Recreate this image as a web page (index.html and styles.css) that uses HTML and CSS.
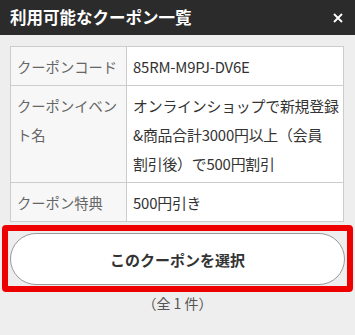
FILE: index.html
```html
<!DOCTYPE html>
<html lang="ja">
<head>
  <meta charset="UTF-8" />
  <meta name="viewport" content="width=device-width, initial-scale=1.0"/>
  <title>利用可能なクーポン一覧</title>
  <link rel="stylesheet" href="styles.css">
</head>
<body>

<div class="modal-header">
  <h1>利用可能なクーポン一覧</h1>
  <button class="close-btn" aria-label="閉じる">
    <svg width="10" height="10" viewBox="0 0 10 10">
      <path d="M1 1L9 9M9 1L1 9" stroke="#fff" stroke-width="1.8" />
    </svg>
  </button>
</div>

<div class="modal-body">
  <table class="coupon-table">
    <tr>
      <th>クーポンコード</th>
      <td>85RM-M9PJ-DV6E</td>
    </tr>
    <tr>
      <th>クーポンイベント名</th>
      <td>オンラインショップで新規登録&amp;商品合計3000円以上（会員<br>割引後）で500円割引</td>
    </tr>
    <tr>
      <th>クーポン特典</th>
      <td>500円引き</td>
    </tr>
  </table>

  <div class="select-wrap">
    <button class="select-btn">このクーポンを選択</button>
  </div>

  <p class="count">（全 1 件）</p>
</div>

</body>
</html>
```

FILE: styles.css
```css
:root {
  --bg: #eeeeee;
  --border: #cccccc;
  --text: #333333;
}

* { box-sizing: border-box; }

body {
  margin: 0;
  background: var(--bg);
  color: var(--text);
  font-family: "Noto Sans CJK JP", "Noto Sans", sans-serif;
  font-size: 15px;
}

.modal-header {
  height: 35px;
  background: #2b2b2b;
  display: flex;
  align-items: center;
  justify-content: space-between;
  padding: 0 8px 0 10px;
}

.modal-header h1 {
  margin: 0;
  color: #fff;
  font-size: 16.5px;
  font-weight: 700;
  line-height: 1;
}

.close-btn {
  background: none;
  border: none;
  padding: 0 4px;
  display: flex;
  cursor: pointer;
}

.modal-body {
  padding: 11px 2px 0;
}

.coupon-table {
  border-collapse: collapse;
  margin: 0 9px 0 8px;
  width: 334px;
  background: #fff;
}

.coupon-table th,
.coupon-table td {
  border: 1px solid var(--border);
  padding: 5px 0 4px 6px;
  line-height: 29px;
  text-align: left;
  vertical-align: top;
}

.coupon-table th {
  width: 116px;
  padding-right: 3px;
  background: #f7f7f7;
  color: #666;
  font-weight: 400;
  font-size: 14.3px;
}

.coupon-table td {
  font-size: 14.9px;
  letter-spacing: -0.2px;
}

.select-wrap {
  margin-top: 3px;
  border: 6px solid #ee0000;
  border-radius: 4px;
  padding: 2px 2px 1px;
}

.select-btn {
  display: block;
  width: 100%;
  height: 52px;
  border: 1px solid #999;
  border-radius: 26px;
  background: #fff;
  color: var(--text);
  font-family: inherit;
  font-size: 15px;
  font-weight: 700;
  cursor: pointer;
}

.count {
  margin: 1px 0 0;
  text-align: center;
  color: #555;
  font-size: 14px;
  line-height: 20px;
}
```
